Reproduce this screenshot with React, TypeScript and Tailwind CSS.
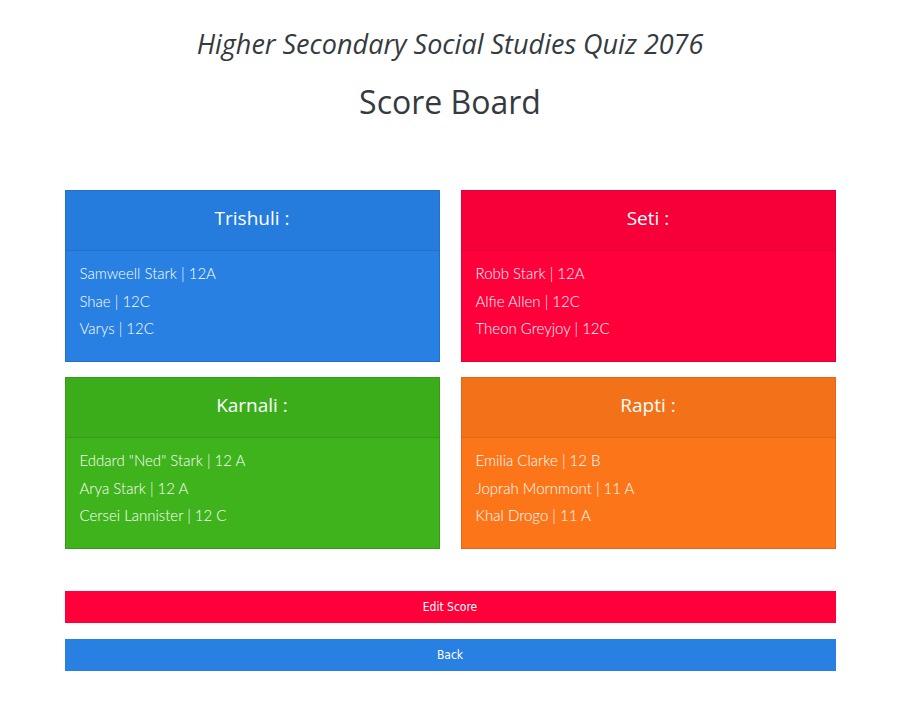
const houses = [
  {
    name: "Trishuli :",
    head: "bg-[#257cdd]",
    body: "bg-[#2880e3]",
    border: "border-[#2270c8]",
    members: ["Samweell Stark | 12A", "Shae | 12C", "Varys | 12C"],
  },
  {
    name: "Seti :",
    head: "bg-[#f70039]",
    body: "bg-[#ff003a]",
    border: "border-[#e0003a]",
    members: ["Robb Stark | 12A", "Alfie Allen | 12C", "Theon Greyjoy | 12C"],
  },
  {
    name: "Karnali :",
    head: "bg-[#3bad1a]",
    body: "bg-[#3eb31b]",
    border: "border-[#349a17]",
    members: ['Eddard "Ned" Stark | 12 A', "Arya Stark | 12 A", "Cersei Lannister | 12 C"],
  },
  {
    name: "Rapti :",
    head: "bg-[#f37118]",
    body: "bg-[#fd7519]",
    border: "border-[#e0671a]",
    members: ["Emilia Clarke | 12 B", "Joprah Mornmont | 11 A", "Khal Drogo | 11 A"],
  },
];

function HouseCard({ house }: { house: (typeof houses)[number] }) {
  return (
    <div className={"flex flex-col border " + house.border}>
      <div
        className={
          "flex h-[60px] items-center justify-center border-b pb-[4px] text-[19px] text-white " +
          house.head +
          " " +
          house.border
        }
      >
        {house.name}
      </div>
      <ul
        className={"flex flex-col px-[14px] pt-[9px] pb-[19px] text-[15px] font-light text-white " + house.body}
        style={{ fontFamily: 'Lato, "Open Sans", sans-serif' }}
      >
        {house.members.map((m) => (
          <li key={m} className="flex h-[27.33px] items-center">
            {m}
          </li>
        ))}
      </ul>
    </div>
  );
}

export default function App() {
  return (
    <div className="min-h-[702px] w-full bg-white">
      <div
        className="flex w-[900px] flex-col items-center text-[#343a40]"
        style={{ fontFamily: '"Open Sans", "Noto Sans", sans-serif' }}
      >
        <h2 className="mt-[26px] text-[27px] leading-[36px] italic">
          Higher Secondary Social Studies Quiz 2076
        </h2>
        <h1 className="mt-[17px] text-[32px] leading-[46px]">Score Board</h1>

        <div className="mt-[65px] grid w-[771px] grid-cols-2 gap-x-[21px] gap-y-[15px]">
          {houses.map((h) => (
            <HouseCard key={h.name} house={h} />
          ))}
        </div>

        <div className="mt-[42px] flex w-[771px] flex-col gap-[16px]">
          <button
            className="h-[32px] w-full bg-[#ff003a] text-[12px] text-white"
            style={{ fontFamily: '"DejaVu Sans Condensed", "DejaVu Sans", sans-serif' }}
          >
            Edit Score
          </button>
          <button
            className="h-[32px] w-full bg-[#2880e3] text-[12px] text-white"
            style={{ fontFamily: '"DejaVu Sans Condensed", "DejaVu Sans", sans-serif' }}
          >
            Back
          </button>
        </div>
      </div>
    </div>
  );
}
